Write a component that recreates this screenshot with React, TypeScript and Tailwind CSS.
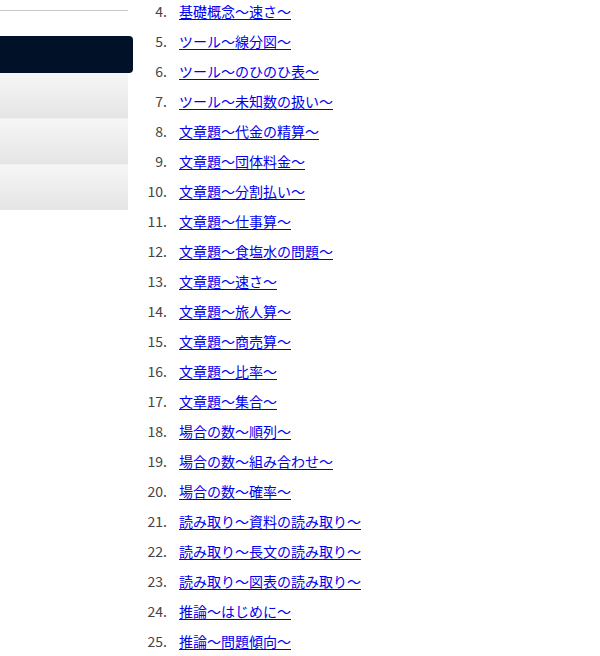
import React from "react";

const items = [
  "基礎概念～速さ～",
  "ツール～線分図～",
  "ツール～のひのひ表～",
  "ツール～未知数の扱い～",
  "文章題～代金の精算～",
  "文章題～団体料金～",
  "文章題～分割払い～",
  "文章題～仕事算～",
  "文章題～食塩水の問題～",
  "文章題～速さ～",
  "文章題～旅人算～",
  "文章題～商売算～",
  "文章題～比率～",
  "文章題～集合～",
  "場合の数～順列～",
  "場合の数～組み合わせ～",
  "場合の数～確率～",
  "読み取り～資料の読み取り～",
  "読み取り～長文の読み取り～",
  "読み取り～図表の読み取り～",
  "推論～はじめに～",
  "推論～問題傾向～",
];

function SideButton() {
  return (
    <div className="h-[45px] w-[128px] bg-gradient-to-b from-[#f6f6f6] to-[#e5e5e5]" />
  );
}

export default function App() {
  return (
    <div
      className="relative h-[656px] w-[600px] overflow-hidden bg-white"
      style={{ fontFamily: '"Noto Sans CJK JP", "Liberation Sans", sans-serif' }}
    >
      <div className="flex">
        <aside className="w-[133px] shrink-0">
          <div className="mt-[10px] h-px w-[128px] bg-[#c8c8c8]" />
          <div className="mt-[25px] h-[37px] w-[133px] rounded-r-[4px] bg-[#001128]" />
          <SideButton />
          <div className="h-px w-[128px] bg-[#f0f0f0]" />
          <SideButton />
          <div className="h-px w-[128px] bg-[#f0f0f0]" />
          <SideButton />
        </aside>
        <ol className="-mt-[4px] ml-[7px] flex flex-col">
          {items.map((t, i) => (
            <li key={t} className="flex h-[30px] items-center text-[14px]">
              <span className="w-[27px] text-right text-[#444]">{i + 4}.</span>
              <a href="#" className="ml-[12px] text-[#0000ee] underline underline-offset-2">
                {t}
              </a>
            </li>
          ))}
        </ol>
      </div>
    </div>
  );
}
